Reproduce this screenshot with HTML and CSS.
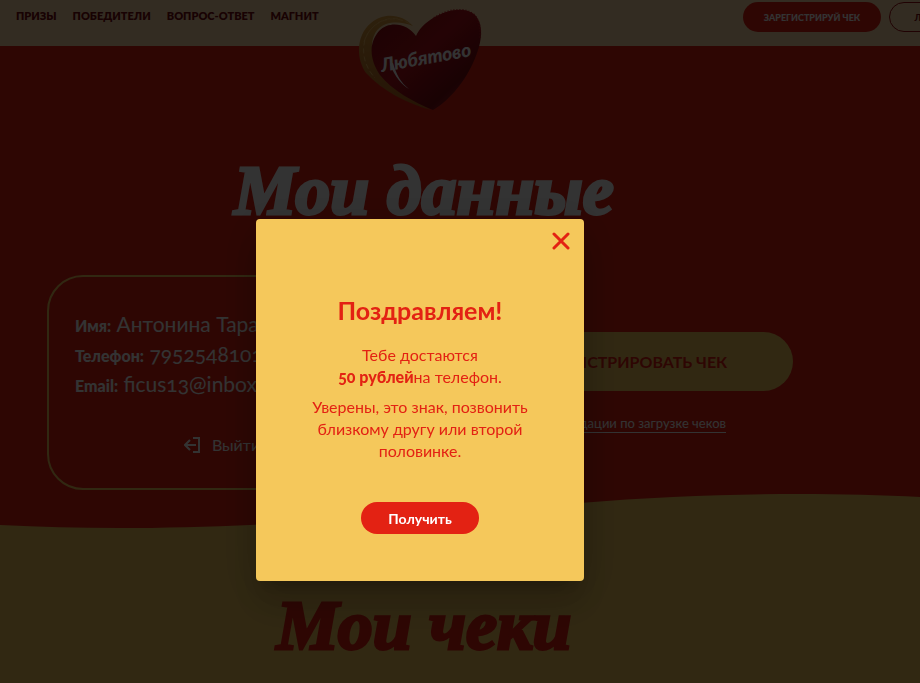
FILE: index.html
```
<!DOCTYPE html>
<html lang="ru">
<head>
  <meta charset="UTF-8" />
  <meta name="viewport" content="width=device-width, initial-scale=1.0"/>
  <title>Любятово - Мои данные</title>
  <link rel="stylesheet" href="styles.css">
</head>
<body>

  <header class="header">
    <nav class="nav">
      <a href="#prizes">ПРИЗЫ</a>
      <a href="#winners">ПОБЕДИТЕЛИ</a>
      <a href="#faq">ВОПРОС-ОТВЕТ</a>
      <a href="#magnit">МАГНИТ</a>
    </nav>

    <div class="header-actions">
      <button class="pill pill-red">ЗАРЕГИСТРИРУЙ ЧЕК</button>
      <button class="pill pill-outline">ЛИЧНЫЙ КАБИНЕТ</button>
    </div>

    <a class="logo" href="#top" aria-label="Любятово">
      <svg width="124" height="102" viewBox="0 0 124 102">
        <defs>
          <linearGradient id="heart" x1="0" y1="0" x2="1" y2="1">
            <stop offset="0" stop-color="#8a0c10"/>
            <stop offset="0.45" stop-color="#b5101a"/>
            <stop offset="0.75" stop-color="#7d0b12"/>
            <stop offset="1" stop-color="#d0343c"/>
          </linearGradient>
          <linearGradient id="wheat" x1="0" y1="0" x2="0" y2="1">
            <stop offset="0" stop-color="#e0a040"/>
            <stop offset="1" stop-color="#b8651a"/>
          </linearGradient>
        </defs>
        <path fill="url(#wheat)" d="M55 17C44 5 26 3 13 14C-1 25-3 48 8 64C25 82 48 94 73 101C50 88 28 72 18 54C10 38 14 20 28 15C38 12 47 14 55 17Z"/>
        <path fill="url(#heart)" d="M58 27C50 15 32 11 21 22C10 35 12 51 22 66C34 81 55 93 75 101C88 94 105 76 115 54C124 35 127 15 116 5C106-3 88 1 75 9C67 14 61 20 58 27Z"/>
        <g fill="none" stroke="#f0b860" stroke-width="1" stroke-dasharray="5 3">
          <path d="M52 15C38 6 20 9 10 24C2 38 5 56 17 69"/>
          <path d="M40 10C25 7 10 18 6 33"/>
        </g>
        <path fill="none" stroke="#c01820" stroke-width="2" stroke-dasharray="1 2" d="M76 9C90 0 106-2 115 5C121 10 123 19 122 29"/>
        <path fill="#fff" d="M35 54C38 65 43 74 51 80C45 77 36 67 32 55Z"/>
        <text class="logo-text" x="24" y="63" transform="rotate(-10 24 63)">Любятово</text>
      </svg>
    </a>
  </header>

  <main>
    <section class="profile">
      <h1 class="title">Мои данные</h1>

      <div class="columns">
        <div class="card">
          <p class="field"><b>Имя:</b> Антонина Тарасова</p>
          <p class="field"><b>Телефон:</b> 79525481010</p>
          <p class="field"><b>Email:</b> ficus13@inbox.ru</p>
          <button class="logout">
            <svg width="17" height="17" viewBox="0 0 17 17" fill="none" stroke="currentColor" stroke-width="2">
              <path d="M9 1H15V15H9M12 8H1M6 3L1 8L6 13"/>
            </svg>
            Выйти
          </button>
        </div>

        <div class="upload">
          <button class="upload-button">ЗАРЕГИСТРИРОВАТЬ ЧЕК</button>
          <a class="upload-link" href="#rules">Рекомендации по загрузке чеков</a>
        </div>
      </div>

      <svg class="wave" viewBox="0 0 920 36" preserveAspectRatio="none">
        <path d="M0 32C170 41 330 29 580 10C700 0 820-1 920 4V36H0Z"/>
      </svg>
    </section>

    <section class="receipts">
      <h2 class="title title-red">Мои чеки</h2>
    </section>
  </main>

  <div class="overlay">
    <div class="modal" role="dialog" aria-modal="true" aria-labelledby="modalTitle">
      <button class="close" aria-label="Закрыть">
        <svg width="18" height="18" viewBox="0 0 18 18" fill="none" stroke="currentColor" stroke-width="3" stroke-linecap="round">
          <path d="M2 2L16 16M16 2L2 16"/>
        </svg>
      </button>
      <h3 id="modalTitle" class="modal-title">Поздравляем!</h3>
      <p class="modal-text">Тебе достаются<br><b>50 рублей</b>на телефон.</p>
      <p class="modal-text">Уверены, это знак, позвонить близкому другу или второй половинке.</p>
      <button class="get">Получить</button>
    </div>
  </div>

</body>
</html>
```

FILE: styles.css
```
* {
  box-sizing: border-box;
}

body {
  margin: 0;
  min-height: 100vh;
  overflow: hidden;
  font-family: Lato, "Noto Sans", sans-serif;
  background: #f5c85b;
  color: #fff;
}

button {
  font-family: inherit;
  border: none;
  cursor: pointer;
}

a {
  text-decoration: none;
}

/* Header */
.header {
  position: relative;
  display: flex;
  justify-content: space-between;
  height: 46px;
  padding: 2px 0 0 16px;
  background: #ffdcaa;
}

.nav {
  display: flex;
  gap: 16px;
  padding-top: 6px;
}

.nav a {
  color: #7a0a10;
  font-size: 11px;
  line-height: 16px;
  font-weight: 800;
}

.header-actions {
  display: flex;
  flex: none;
  width: 177px;
  gap: 8px;
}

.pill {
  flex: none;
  width: 138px;
  height: 30px;
  padding: 0;
  border-radius: 15px;
  font-size: 9px;
  font-weight: 900;
}

.pill-red {
  background: #e32213;
  color: #fff;
}

.pill-outline {
  background: transparent;
  border: 1px solid #a00c10;
  color: #7a0a10;
}

.logo {
  position: absolute;
  top: 9px;
  left: calc(50% - 102px);
}

.logo-text {
  font-family: Lato, sans-serif;
  font-size: 19px;
  font-weight: 900;
  font-style: italic;
  fill: #fff;
}

/* Profile */
.profile {
  background: #e32213;
  padding-top: 99px;
}

.title {
  margin: 0;
  padding-right: 72px;
  text-align: center;
  font-family: "Liberation Serif", serif;
  font-size: 70px;
  line-height: 92px;
  font-weight: bold;
  font-style: italic;
  -webkit-text-stroke: 3px currentColor;
}

.columns {
  display: grid;
  grid-template-columns: 1fr 332px;
  gap: 64px;
  padding: 38px 127px 0 47px;
}

.card {
  border: 2px solid #f5c85b;
  border-radius: 36px;
  padding: 32px 26px;
  height: 215px;
}

.field {
  margin: 0;
  font-size: 21px;
  line-height: 30px;
  white-space: nowrap;
  font-variant-numeric: oldstyle-nums;
}

.field b {
  font-size: 16px;
  line-height: 16px;
  font-weight: 900;
}

.logout {
  display: flex;
  align-items: center;
  gap: 11px;
  margin: 36px auto 0;
  padding: 0;
  background: none;
  color: #fff;
  font-size: 16px;
  line-height: 20px;
}

.upload {
  display: flex;
  flex-direction: column;
  align-items: center;
  padding-top: 57px;
}

.upload-button {
  width: 100%;
  height: 59px;
  border-radius: 30px;
  background: #f5c85b;
  color: #e32213;
  font-size: 16px;
  font-weight: bold;
}

.upload-link {
  margin-top: 24px;
  color: #fff;
  font-size: 13px;
  line-height: 17px;
  border-bottom: 1px solid #fff;
}

.wave {
  display: block;
  width: 100%;
  height: 36px;
  margin-top: 3px;
  fill: #f5c85b;
}

/* Receipts */
.receipts {
  padding-top: 51px;
}

.title-red {
  color: #e32213;
}

/* Modal */
.overlay {
  position: fixed;
  inset: 0;
  display: flex;
  justify-content: center;
  align-items: flex-start;
  padding: 219px 80px 0 0;
  background: rgba(0, 0, 0, 0.8);
}

.modal {
  display: flex;
  flex-direction: column;
  align-items: center;
  width: 328px;
  padding: 13px 14px 47px;
  border-radius: 4px;
  background: #f5c85b;
  color: #e32213;
  text-align: center;
  box-shadow: 0 11px 15px -7px rgba(0, 0, 0, 0.2),
    0 24px 38px 3px rgba(0, 0, 0, 0.14),
    0 9px 46px 8px rgba(0, 0, 0, 0.12);
}

.close {
  align-self: flex-end;
  height: 18px;
  padding: 0;
  background: none;
  color: #e32213;
}

.modal-title {
  margin: 44px 0 18px;
  font-size: 25px;
  line-height: 32px;
  font-weight: bold;
}

.modal-text {
  width: 220px;
  margin: 0 0 8px;
  font-size: 16px;
  line-height: 22px;
  font-variant-numeric: oldstyle-nums;
}

.modal-text b {
  font-weight: 900;
}

.get {
  width: 118px;
  height: 32px;
  margin-top: 32px;
  border-radius: 16px;
  background: #e32213;
  color: #fff;
  font-size: 14px;
  font-weight: bold;
}
```
